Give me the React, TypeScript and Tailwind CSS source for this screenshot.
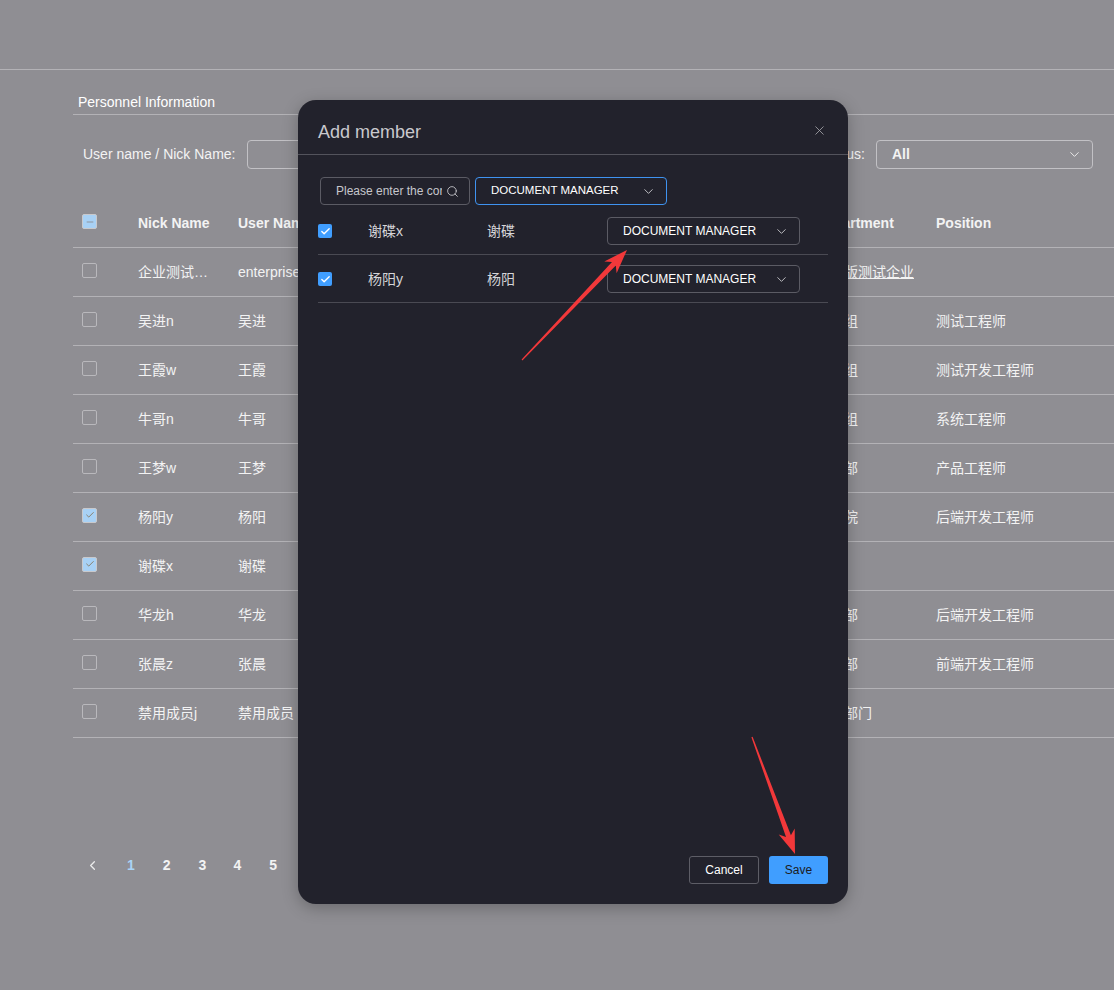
import { ChevronDown, ChevronLeft, Search, X, Check, Minus } from "lucide-react";

type Member = {
  nick: string;
  user: string;
  dept: string;
  pos: string;
  checked?: boolean;
};

const members: Member[] = [
  { nick: "企业测试账号", user: "enterprise_test", dept: "旗舰版测试企业", pos: "" },
  { nick: "吴进n", user: "吴进", dept: "测试组", pos: "测试工程师" },
  { nick: "王霞w", user: "王霞", dept: "测试组", pos: "测试开发工程师" },
  { nick: "牛哥n", user: "牛哥", dept: "测试组", pos: "系统工程师" },
  { nick: "王梦w", user: "王梦", dept: "产品部", pos: "产品工程师" },
  { nick: "杨阳y", user: "杨阳", dept: "研究院", pos: "后端开发工程师", checked: true },
  { nick: "谢碟x", user: "谢碟", dept: "", pos: "", checked: true },
  { nick: "华龙h", user: "华龙", dept: "研发部", pos: "后端开发工程师" },
  { nick: "张晨z", user: "张晨", dept: "研发部", pos: "前端开发工程师" },
  { nick: "禁用成员j", user: "禁用成员", dept: "测试部门", pos: "" },
];

const selected = [
  { nick: "谢碟x", user: "谢碟" },
  { nick: "杨阳y", user: "杨阳" },
];

function TableCheckbox({ checked }: { checked?: boolean }) {
  if (checked) {
    return (
      <span className="flex h-[15px] w-[15px] -translate-y-[2px] items-center justify-center rounded-[2px] border border-[#c9c9cc] bg-[#a8d1f5]">
        <Check size={10} strokeWidth={1.6} className="text-[#7a5b2e]" />
      </span>
    );
  }
  return <span className="block h-[15px] w-[15px] -translate-y-[2px] rounded-[2px] border border-[#b9b8bc]" />;
}

// tapered annotation arrow
function arrow(x1: number, y1: number, x2: number, y2: number) {
  const dx = x2 - x1;
  const dy = y2 - y1;
  const len = Math.hypot(dx, dy);
  const ux = dx / len;
  const uy = dy / len;
  const nx = -uy;
  const ny = ux;
  const headLen = 24;
  const bx = x2 - ux * headLen;
  const by = y2 - uy * headLen;
  const neckX = bx + ux * 5;
  const neckY = by + uy * 5;
  const pts: [number, number][] = [
    [x1 + nx * 0.6, y1 + ny * 0.6],
    [neckX + nx * 2.6, neckY + ny * 2.6],
    [bx + nx * 8.5, by + ny * 8.5],
    [x2, y2],
    [bx - nx * 8.5, by - ny * 8.5],
    [neckX - nx * 2.6, neckY - ny * 2.6],
    [x1 - nx * 0.6, y1 - ny * 0.6],
  ];
  return pts.map((p) => `${p[0].toFixed(1)},${p[1].toFixed(1)}`).join(" ");
}

export default function App() {
  return (
    <div className="relative h-[990px] w-full overflow-hidden bg-[#8f8e93] font-['Liberation_Sans','Noto_Sans_CJK_SC',sans-serif] text-[14px] text-[#f3f3f3]">
      {/* top bar */}
      <div className="h-[70px] border-b border-[#b3b2b6]" />

      <div className="pl-[73px]">
        {/* title */}
        <div className="border-b border-[#b3b2b6] pb-[3px] pl-[5px] pt-[23px] leading-[18px] text-white">
          Personnel Information
        </div>

        {/* filters */}
        <div className="mt-[25px] flex h-[29px] items-center pr-[21px]">
          <span className="ml-[10px]">User name / Nick Name:</span>
          <div className="ml-[12px] h-[29px] w-[220px] rounded-[4px] border border-[#c2c1c5]" />
          <span className="ml-auto">Status:</span>
          <div className="ml-[11px] flex h-[29px] w-[217px] items-center justify-between rounded-[4px] border border-[#c2c1c5] pl-[15px] pr-[10px]">
            <span className="font-bold">All</span>
            <ChevronDown size={15} strokeWidth={1.5} className="text-[#f0f0f0]" />
          </div>
        </div>

        {/* table */}
        <div className="mt-[29px]">
          <div className="grid h-[50px] grid-cols-[65px_100px_150px_428px_120px_1fr] items-center border-b border-[#b3b2b6] pt-[2px] font-bold">
            <div className="pl-[9px]">
              <span className="flex h-[15px] w-[15px] -translate-y-[2px] items-center justify-center rounded-[2px] border border-[#c9c9cc] bg-[#a8d1f5]">
                <Minus size={10} strokeWidth={2} className="text-[#8a8a8e]" />
              </span>
            </div>
            <div>Nick Name</div>
            <div>User Name</div>
            <div>Phone</div>
            <div>Department</div>
            <div>Position</div>
          </div>
          {members.map((m) => (
            <div
              key={m.nick}
              className="grid h-[49px] grid-cols-[65px_100px_150px_428px_120px_1fr] items-center border-b border-[#b3b2b6]"
            >
              <div className="pl-[9px]">
                <TableCheckbox checked={m.checked} />
              </div>
              <div className="w-[76px] truncate">{m.nick}</div>
              <div className="truncate pr-2">{m.user}</div>
              <div />
              <div className={m.dept.startsWith("旗舰") ? "whitespace-nowrap underline" : "whitespace-nowrap"}>{m.dept}</div>
              <div>{m.pos}</div>
            </div>
          ))}
        </div>

        {/* pagination */}
        <div className="mt-[112px] flex h-[30px] items-center font-bold">
          <ChevronLeft size={15} strokeWidth={2} className="ml-[12px] text-[#ececec]" />
          <span className="ml-[27px] text-[#a9d3f6]">1</span>
          <span className="ml-[28px]">2</span>
          <span className="ml-[28px]">3</span>
          <span className="ml-[27px]">4</span>
          <span className="ml-[28px]">5</span>
        </div>
      </div>

      {/* dialog */}
      <div className="absolute left-[298px] top-[100px] flex h-[804px] w-[550px] flex-col rounded-[18px] bg-[#22222c] shadow-[0_4px_16px_rgba(0,0,0,0.25)]">
        <div className="flex h-[55px] items-start justify-between border-b border-[#53535c] px-[20px] pt-[20px]">
          <span className="text-[18px] leading-[24px] text-[#c9c9cd]">Add member</span>
          <X size={15} strokeWidth={1.3} className="mr-[1px] mt-[3px] text-[#a9a9ae]" />
        </div>

        <div className="flex-1 px-[20px] pt-[22px]">
          <div className="flex h-[28px] items-center">
            <div className="ml-[2px] flex h-[28px] w-[150px] items-center rounded-[4px] border border-[#5b5b64] pl-[15px] pr-[10px]">
              <span className="w-[106px] overflow-hidden whitespace-nowrap text-[12px] text-[#c7c7cc]">
                Please enter the content
              </span>
              <Search size={13} strokeWidth={1.6} className="ml-auto text-[#c7c7cc]" />
            </div>
            <div className="ml-[5px] flex h-[28px] w-[192px] items-center justify-between rounded-[4px] border border-[#3f93f0] pl-[15px] pr-[10px]">
              <span className="text-[11.5px] text-white">DOCUMENT MANAGER</span>
              <ChevronDown size={15} strokeWidth={1.4} className="text-[#d0d0d4]" />
            </div>
          </div>

          <div className="mt-[2px]">
            {selected.map((s) => (
              <div
                key={s.nick}
                className="grid h-[48px] grid-cols-[50px_119px_120px_1fr] items-center border-b border-[#4a4a53] pt-[1px] text-[#d5d5d9]"
              >
                <span className="flex h-[14px] w-[14px] items-center justify-center rounded-[2px] bg-[#409eff]">
                  <Check size={11} strokeWidth={3} className="text-white" />
                </span>
                <span>{s.nick}</span>
                <span>{s.user}</span>
                <div className="flex h-[28px] w-[193px] items-center justify-between rounded-[4px] border border-[#5b5b64] pl-[15px] pr-[10px]">
                  <span className="text-[12px] text-white">DOCUMENT MANAGER</span>
                  <ChevronDown size={15} strokeWidth={1.4} className="text-[#d0d0d4]" />
                </div>
              </div>
            ))}
          </div>
        </div>

        <div className="flex justify-end gap-[10px] px-[20px] pb-[20px]">
          <button className="h-[28px] w-[70px] rounded-[3px] border border-[#5d5d66] text-[12px] text-white">
            Cancel
          </button>
          <button className="h-[28px] w-[59px] rounded-[3px] bg-[#409eff] text-[12px] text-[#1c1c22]">
            Save
          </button>
        </div>
      </div>

      {/* annotation arrows */}
      <svg className="pointer-events-none absolute left-0 top-0" width="1114" height="990">
        <polygon points={arrow(522, 360, 627, 250)} fill="#f2383a" />
        <polygon points={arrow(752, 737, 795, 854)} fill="#f2383a" />
      </svg>
    </div>
  );
}
